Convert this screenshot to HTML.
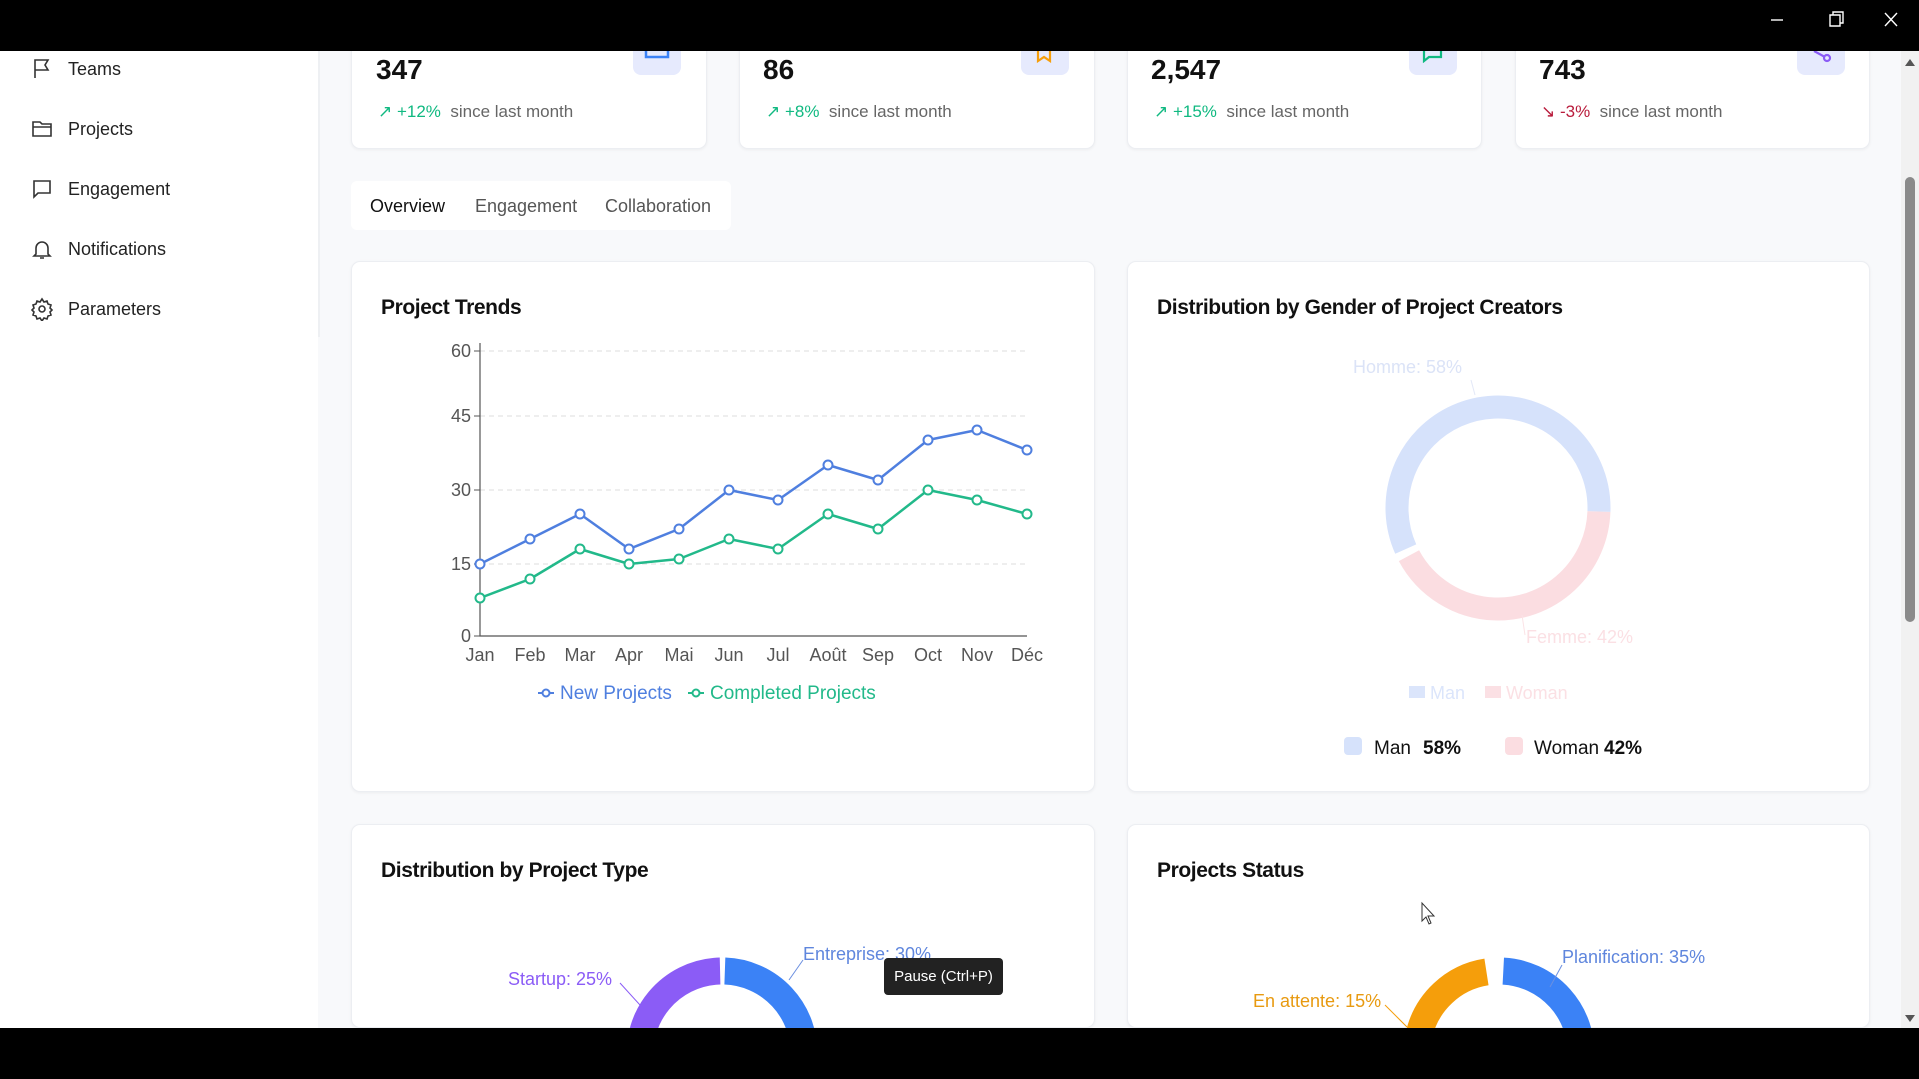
<!DOCTYPE html>
<html style="overflow:hidden"><head><meta charset="utf-8"><style>
*{margin:0;padding:0;box-sizing:border-box}
html,body{width:1919px;height:1079px;overflow:hidden}
body{background:#f8f9fb;font-family:"Liberation Sans",sans-serif;position:relative;color:#111}
.a{position:absolute}
.top{left:0;top:0;width:1919px;height:51px;background:#000}
.bot{left:0;top:1028px;width:1919px;height:51px;background:#000}
.side{left:0;top:51px;width:318px;height:977px;background:#fff}
.sline{left:318px;top:51px;width:2px;height:286px;background:#eef0f3}
.nav{left:30px;font-size:18px;color:#222;display:flex;align-items:center;gap:14px}
.nav svg{width:24px;height:24px;fill:none;stroke:#333;stroke-width:1.6}
.card{background:#fff;border:1px solid #eceef2;border-radius:9px;box-shadow:0 1px 3px rgba(0,0,0,.05)}
.num{font-size:28px;font-weight:bold;color:#111}
.chg{font-size:17px;color:#666}
.up{color:#10b981}.dn{color:#b91c3c}
.ib{width:48px;height:24px;border-radius:0 0 8px 8px;background:#e6eafd}
.ttl{font-size:21px;font-weight:bold;color:#111;letter-spacing:-.4px}
.tab{font-size:18px;color:#555}
</style></head><body>

<div class="a side"></div><div class="a sline"></div>
<div class="a nav" style="top:57px"><svg viewBox="0 0 24 24"><path d="M5 21V3h13l-3 5 3 5H5"/></svg>Teams</div>
<div class="a nav" style="top:117px"><svg viewBox="0 0 24 24"><path d="M3 5h7l2 2h9v12H3z M3 10h18"/></svg>Projects</div>
<div class="a nav" style="top:177px"><svg viewBox="0 0 24 24"><path d="M4 4h16v12H8l-4 4z"/></svg>Engagement</div>
<div class="a nav" style="top:237px"><svg viewBox="0 0 24 24"><path d="M6 17V11a6 6 0 0112 0v6l2 2H4z M10 21h4"/></svg>Notifications</div>
<div class="a nav" style="top:297px"><svg viewBox="0 0 24 24"><circle cx="12" cy="12" r="3"/><path d="M12 2l2 3 3-1 1 3 3 1-1 3 2 2-2 2 1 3-3 1-1 3-3-1-2 3-2-3-3 1-1-3-3-1 1-3-2-2 2-2-1-3 3-1 1-3 3 1z"/></svg>Parameters</div>

<!-- stat cards -->
<div class="a card" style="left:351px;top:40px;width:356px;height:109px"></div>
<div class="a card" style="left:739px;top:40px;width:356px;height:109px"></div>
<div class="a card" style="left:1127px;top:40px;width:355px;height:109px"></div>
<div class="a card" style="left:1515px;top:40px;width:355px;height:109px"></div>
<div class="a top"></div>
<div class="a ib" style="left:633px;top:51px"></div>
<div class="a ib" style="left:1021px;top:51px"></div>
<div class="a ib" style="left:1409px;top:51px"></div>
<div class="a ib" style="left:1797px;top:51px"></div>
<svg class="a" style="left:640px;top:51px" width="40" height="10"><path d="M6 0v6h22V0" fill="none" stroke="#3b82f6" stroke-width="2.5"/></svg>
<svg class="a" style="left:1035px;top:51px" width="20" height="12"><path d="M3 0v10l6-4 6 4V0" fill="none" stroke="#f59e0b" stroke-width="2.2"/></svg>
<svg class="a" style="left:1422px;top:51px" width="24" height="12"><path d="M2 0v10l5-4h12V0" fill="none" stroke="#10b981" stroke-width="2.2"/></svg>
<svg class="a" style="left:1812px;top:51px" width="24" height="14"><circle cx="15" cy="7" r="3" fill="none" stroke="#8b5cf6" stroke-width="2.2"/><path d="M2 0l11 6" stroke="#8b5cf6" stroke-width="2.2"/></svg>

<div class="a num" style="left:376px;top:54px">347</div>
<div class="a num" style="left:763px;top:54px">86</div>
<div class="a num" style="left:1151px;top:54px">2,547</div>
<div class="a num" style="left:1539px;top:54px">743</div>
<div class="a chg" style="left:378px;top:102px"><span class="up">↗ +12%</span>&nbsp; since last month</div>
<div class="a chg" style="left:766px;top:102px"><span class="up">↗ +8%</span>&nbsp; since last month</div>
<div class="a chg" style="left:1154px;top:102px"><span class="up">↗ +15%</span>&nbsp; since last month</div>
<div class="a chg" style="left:1541px;top:102px"><span class="dn">↘ -3%</span>&nbsp; since last month</div>

<!-- tabs -->
<div class="a" style="left:351px;top:181px;width:380px;height:49px;background:#fff;border-radius:6px"></div>
<div class="a tab" style="left:370px;top:196px;color:#111">Overview</div>
<div class="a tab" style="left:475px;top:196px">Engagement</div>
<div class="a tab" style="left:605px;top:196px">Collaboration</div>

<!-- chart cards -->
<div class="a card" style="left:351px;top:261px;width:744px;height:531px"></div>
<div class="a card" style="left:1127px;top:261px;width:743px;height:531px"></div>
<div class="a card" style="left:351px;top:824px;width:744px;height:204px"></div>
<div class="a card" style="left:1127px;top:824px;width:743px;height:204px"></div>
<div class="a ttl" style="left:381px;top:296px">Project Trends</div>
<div class="a ttl" style="left:1157px;top:296px">Distribution by Gender of Project Creators</div>
<div class="a ttl" style="left:381px;top:859px">Distribution by Project Type</div>
<div class="a ttl" style="left:1157px;top:859px">Projects Status</div>

<svg class="a" style="left:0;top:0" width="1919" height="1079" font-family="Liberation Sans, sans-serif">
<g stroke="#ddd" stroke-dasharray="5 4"><path d="M480 351H1027M480 416H1027M480 490H1027M480 564H1027"/></g>
<path d="M480 343V636H1027" stroke="#555" fill="none" stroke-width="1.2"/>
<g stroke="#555"><path d="M474 351h6M474 416h6M474 490h6M474 564h6M474 636h6"/></g>
<g font-size="18" fill="#555" text-anchor="end"><text x="471" y="357">60</text><text x="471" y="422">45</text><text x="471" y="496">30</text><text x="471" y="570">15</text><text x="471" y="642">0</text></g>
<g font-size="18" fill="#555" text-anchor="middle">
<text x="480" y="661">Jan</text><text x="530" y="661">Feb</text><text x="580" y="661">Mar</text><text x="629" y="661">Apr</text><text x="679" y="661">Mai</text><text x="729" y="661">Jun</text><text x="778" y="661">Jul</text><text x="828" y="661">Août</text><text x="878" y="661">Sep</text><text x="928" y="661">Oct</text><text x="977" y="661">Nov</text><text x="1027" y="661">Déc</text></g>
<polyline fill="none" stroke="#4f7fdf" stroke-width="2.5" stroke-linejoin="round" points="480,564 530,539 580,514 629,549 679,529 729,490 778,500 828,465 878,480 928,440 977,430 1027,450"/>
<polyline fill="none" stroke="#22b98a" stroke-width="2.5" stroke-linejoin="round" points="480,598 530,579 580,549 629,564 679,559 729,539 778,549 828,514 878,529 928,490 977,500 1027,514"/>
<g fill="#fff" stroke="#4f7fdf" stroke-width="2"><circle cx="480" cy="564" r="4.5"/><circle cx="530" cy="539" r="4.5"/><circle cx="580" cy="514" r="4.5"/><circle cx="629" cy="549" r="4.5"/><circle cx="679" cy="529" r="4.5"/><circle cx="729" cy="490" r="4.5"/><circle cx="778" cy="500" r="4.5"/><circle cx="828" cy="465" r="4.5"/><circle cx="878" cy="480" r="4.5"/><circle cx="928" cy="440" r="4.5"/><circle cx="977" cy="430" r="4.5"/><circle cx="1027" cy="450" r="4.5"/></g>
<g fill="#fff" stroke="#22b98a" stroke-width="2"><circle cx="480" cy="598" r="4.5"/><circle cx="530" cy="579" r="4.5"/><circle cx="580" cy="549" r="4.5"/><circle cx="629" cy="564" r="4.5"/><circle cx="679" cy="559" r="4.5"/><circle cx="729" cy="539" r="4.5"/><circle cx="778" cy="549" r="4.5"/><circle cx="828" cy="514" r="4.5"/><circle cx="878" cy="529" r="4.5"/><circle cx="928" cy="490" r="4.5"/><circle cx="977" cy="500" r="4.5"/><circle cx="1027" cy="514" r="4.5"/></g>
<path d="M538 693h16" stroke="#4f7fdf" stroke-width="2"/><circle cx="546" cy="693" r="3.5" fill="#fff" stroke="#4f7fdf" stroke-width="2"/>
<text x="560" y="699" font-size="19" fill="#4f7fdf">New Projects</text>
<path d="M688 693h16" stroke="#22b98a" stroke-width="2"/><circle cx="696" cy="693" r="3.5" fill="#fff" stroke="#22b98a" stroke-width="2"/>
<text x="710" y="699" font-size="19" fill="#22b98a">Completed Projects</text>

<g transform="rotate(2 1498 508)"><circle cx="1498" cy="508" r="101" fill="none" stroke="#fbdde1" stroke-width="23" stroke-dasharray="264 400"/></g>
<g transform="rotate(156 1498 508)"><circle cx="1498" cy="508" r="101" fill="none" stroke="#d6e2fb" stroke-width="23" stroke-dasharray="363 400"/></g>
<path d="M1471 380l4 15" stroke="#e3e8f7"/><path d="M1522 615l3 20" stroke="#fbe3e6"/>
<text x="1353" y="373" font-size="18" fill="#dbe3f7">Homme: 58%</text>
<text x="1526" y="643" font-size="18" fill="#fbe0e4">Femme: 42%</text>
<rect x="1409" y="686" width="16" height="12" fill="#dbe5fb"/><text x="1430" y="699" font-size="18" fill="#dbe5fb">Man</text>
<rect x="1485" y="686" width="16" height="12" fill="#fbe0e4"/><text x="1506" y="699" font-size="18" fill="#fbe0e4">Woman</text>
<rect x="1344" y="737" width="18" height="18" rx="4" fill="#d6e2fb"/><text x="1374" y="754" font-size="19" fill="#111">Man</text><text x="1423" y="754" font-size="19" font-weight="bold" fill="#111">58%</text>
<rect x="1505" y="737" width="18" height="18" rx="4" fill="#fbdde1"/><text x="1534" y="754" font-size="19" fill="#111">Woman</text><text x="1604" y="754" font-size="19" font-weight="bold" fill="#111">42%</text>

<g transform="rotate(-88 722 1053)"><circle cx="722" cy="1053" r="82" fill="none" stroke="#3b82f6" stroke-width="27" stroke-dasharray="154 600"/></g>
<g transform="rotate(-185 722 1053)"><circle cx="722" cy="1053" r="82" fill="none" stroke="#8b5cf6" stroke-width="27" stroke-dasharray="134 600"/></g>
<path d="M620 983l20 22" stroke="#8b5cf6"/><path d="M803 960l-14 20" stroke="#6b8fe0"/>
<text x="508" y="985" font-size="18" fill="#8b5cf6">Startup: 25%</text>
<text x="803" y="960" font-size="18" fill="#5f86dd">Entreprise: 30%</text>
<g transform="rotate(-87 1499 1053)"><circle cx="1499" cy="1053" r="82" fill="none" stroke="#3b82f6" stroke-width="27" stroke-dasharray="180 600"/></g>
<g transform="rotate(-168 1499 1053)"><circle cx="1499" cy="1053" r="82" fill="none" stroke="#f59e0b" stroke-width="27" stroke-dasharray="99 600"/></g>
<path d="M1562 965l-12 22" stroke="#6b8fe0"/><path d="M1385 1005l22 22" stroke="#f59e0b"/>
<text x="1562" y="963" font-size="18" fill="#5f86dd">Planification: 35%</text>
<text x="1253" y="1007" font-size="18" fill="#e89a10">En attente: 15%</text>
<path d="M1422 903v18l4-4 3 7 2-1-3-7h6z" fill="#fff" stroke="#333"/>
</svg>
<div class="a" style="left:884px;top:958px;width:119px;height:37px;background:#222;border-radius:4px;color:#fff;font-size:15px;line-height:37px;text-align:center">Pause (Ctrl+P)</div>

<div class="a" style="left:1901px;top:51px;width:18px;height:977px;background:#f1f1f1"></div>
<div class="a" style="left:1905px;top:177px;width:10px;height:445px;background:#8a8a8a;border-radius:5px"></div>
<svg class="a" style="left:1901px;top:54px" width="18" height="970"><path d="M4 12l5-7 5 7z M4 961l5 7 5-7z" fill="#555"/></svg>
<div class="a bot"></div>
<svg class="a" style="left:1768px;top:10px" width="145" height="24" fill="none" stroke="#fff" stroke-width="1.4"><path d="M3 10h12"/><path d="M62 5h10v11h-10z M65 5v-3h10v11h-3"/><path d="M117 3l12 13M129 3l-12 13"/></svg>
</body></html>
